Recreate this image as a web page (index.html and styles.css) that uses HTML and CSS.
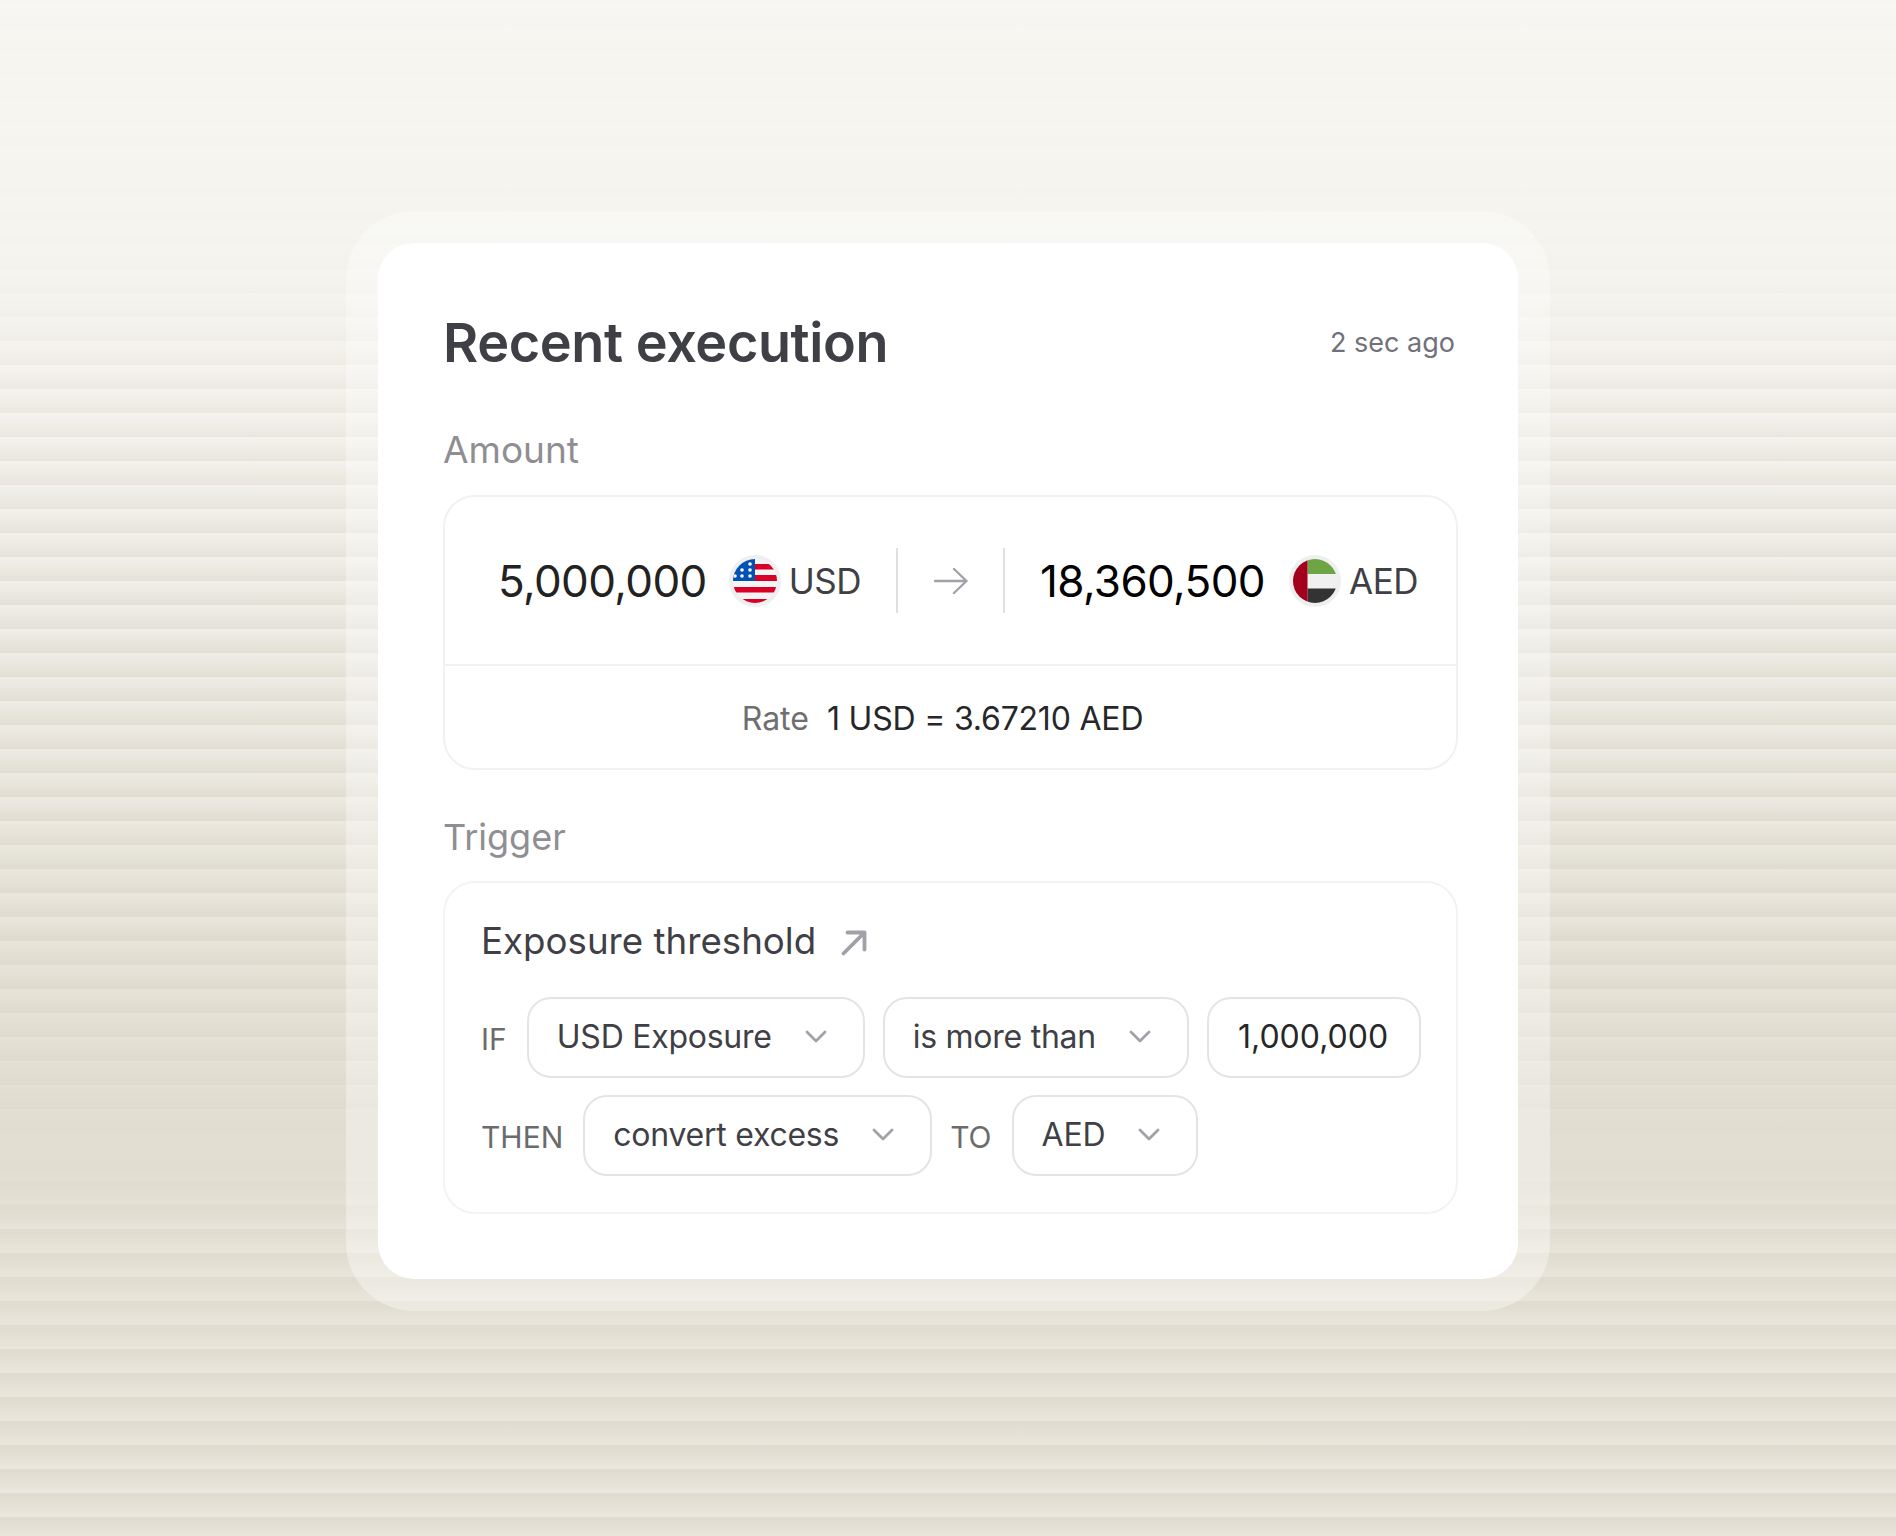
FILE: index.html

```html
<!DOCTYPE html>
<html lang="en">
<head>
  <meta charset="UTF-8" />
  <title>Recent execution</title>
  <meta name="viewport" content="width=device-width, initial-scale=1" />
  <link rel="stylesheet" href="styles.css">
</head>
<body>

  <div class="frame">
    <div class="card">

      <div class="card-head">
        <h1>Recent execution</h1>
        <span class="ago">2 sec ago</span>
      </div>

      <div class="section-label amount-label">Amount</div>
      <div class="amount-box">
        <div class="amount-row">
          <span class="num">5,000,000</span>
          <svg class="flag flag-usd" viewBox="0 0 52 52">
            <defs><clipPath id="clipUsd"><circle cx="26" cy="26" r="22" /></clipPath></defs>
            <circle cx="26" cy="26" r="26" fill="#efefef" />
            <g clip-path="url(#clipUsd)">
              <rect x="4" y="4" width="44" height="44" fill="#f4f4f4" />
              <rect x="26" y="9" width="22" height="5.5" fill="#d80027" />
              <rect x="26" y="20" width="22" height="6" fill="#d80027" />
              <rect x="4" y="32" width="44" height="5.5" fill="#d80027" />
              <rect x="4" y="44" width="44" height="5" fill="#d80027" />
              <rect x="4" y="4" width="22" height="22" fill="#0052b4" />
              <circle cx="21" cy="9" r="1.8" fill="#fff" />
              <circle cx="13" cy="15" r="1.8" fill="#fff" />
              <circle cx="21" cy="15" r="1.8" fill="#fff" />
              <circle cx="13" cy="21" r="1.8" fill="#fff" />
              <circle cx="21" cy="21" r="1.8" fill="#fff" />
              <circle cx="6" cy="21" r="1.8" fill="#fff" />
            </g>
          </svg>
          <span class="code code-usd">USD</span>
          <span class="vline vline-a"></span>
          <svg class="arrow-right" viewBox="0 0 34 28" fill="none" stroke="#a1a1aa" stroke-width="2.4" stroke-linecap="round" stroke-linejoin="round">
            <path d="M1 14H32.5M20 2L32.5 14L20 26" />
          </svg>
          <span class="vline vline-b"></span>
          <span class="num num-to">18,360,500</span>
          <svg class="flag flag-aed" viewBox="0 0 52 52">
            <defs><clipPath id="clipAed"><circle cx="26" cy="26" r="22" /></clipPath></defs>
            <circle cx="26" cy="26" r="26" fill="#efefef" />
            <g clip-path="url(#clipAed)">
              <rect x="4" y="4" width="44" height="44" fill="#f0f0f0" />
              <rect x="18.5" y="4" width="30" height="15" fill="#6da544" />
              <rect x="18.5" y="33.5" width="30" height="15" fill="#333" />
              <rect x="4" y="4" width="14.5" height="44" fill="#a2001d" />
            </g>
          </svg>
          <span class="code">AED</span>
        </div>
        <div class="rate-row">
          <span class="rate-label">Rate</span>
          <span class="rate-value">1 USD = 3.67210 AED</span>
        </div>
      </div>

      <div class="section-label trigger-label">Trigger</div>
      <div class="trigger-box">
        <div class="trigger-title">
          <span>Exposure threshold</span>
          <svg class="arrow-out" viewBox="0 0 26 26" fill="none" stroke="#a1a1aa" stroke-width="3.8" stroke-linecap="round" stroke-linejoin="round">
            <path d="M2.5 23.5L23.5 2.5M6.5 2.5H23.5V19.5" />
          </svg>
        </div>
        <div class="rule-row">
          <span class="word">IF</span>
          <div class="pill">
            <span>USD Exposure</span>
            <svg class="chev" viewBox="0 0 22 13" fill="none" stroke="#a1a1aa" stroke-width="2.8" stroke-linecap="round" stroke-linejoin="round"><path d="M2 2L11 11L20 2" /></svg>
          </div>
          <div class="pill">
            <span>is more than</span>
            <svg class="chev" viewBox="0 0 22 13" fill="none" stroke="#a1a1aa" stroke-width="2.8" stroke-linecap="round" stroke-linejoin="round"><path d="M2 2L11 11L20 2" /></svg>
          </div>
          <div class="pill pill-num">
            <span>1,000,000</span>
          </div>
        </div>
        <div class="rule-row">
          <span class="word">THEN</span>
          <div class="pill">
            <span>convert excess</span>
            <svg class="chev" viewBox="0 0 22 13" fill="none" stroke="#a1a1aa" stroke-width="2.8" stroke-linecap="round" stroke-linejoin="round"><path d="M2 2L11 11L20 2" /></svg>
          </div>
          <span class="word">TO</span>
          <div class="pill">
            <span>AED</span>
            <svg class="chev" viewBox="0 0 22 13" fill="none" stroke="#a1a1aa" stroke-width="2.8" stroke-linecap="round" stroke-linejoin="round"><path d="M2 2L11 11L20 2" /></svg>
          </div>
        </div>
      </div>

    </div>
  </div>

</body>
</html>
```

FILE: styles.css

```css
* {
  box-sizing: border-box;
}
body {
  margin: 0;
  height: 1536px;
  overflow: hidden;
  display: flex;
  justify-content: center;
  padding-top: 211px;
  font-family: Inter, "Noto Sans", sans-serif;
  color: #3f3f46;
  background: linear-gradient(to bottom,
    #f7f6f2 0, #f6f5f0 150px, #f5f4ef 210px, #f3f1eb 300px, #ede9e1 400px, #e4e1d7 600px, #e1ddd1 800px,
    #dfdbce 950px, #dfdbcf 1100px, #e4e1d6 1200px, #e8e5da 1240px, #ebe8df 1536px);
}
/* the blinds: top colour of every 24px slat fades into the bottom colour */
body::before {
  content: "";
  position: fixed;
  inset: 0;
  background: linear-gradient(to bottom,
    #f7f6f2 0, #f6f5f0 150px, #f5f4ef 210px, #f4f3ee 400px, #f0efe9 600px, #eceae2 800px,
    #e8e5da 950px, #e2dfd3 1100px, #dfdbce 1200px, #dedacd 1536px);
  -webkit-mask-image: linear-gradient(to bottom, #000, transparent);
  mask-image: linear-gradient(to bottom, #000, transparent);
  -webkit-mask-size: 100% 24px;
  mask-size: 100% 24px;
  -webkit-mask-position: 0 5px;
  mask-position: 0 5px;
}
.frame {
  position: relative;
  width: 1204px;
  height: 1100px;
  padding: 32px;
  border-radius: 68px;
  background: rgba(255, 255, 255, 0.35);
}
.card {
  height: 1036px;
  padding: 65px 60px 0 65px;
  border-radius: 36px;
  background: #fff;
}
.card-head {
  display: flex;
  justify-content: space-between;
  align-items: center;
  height: 68px;
  padding-right: 3px;
}
h1 {
  margin: 0;
  font-size: 54px;
  font-weight: 600;
  letter-spacing: -0.4px;
}
.ago {
  font-size: 27px;
  color: #71717a;
}
.section-label {
  font-size: 36px;
  line-height: 44px;
  color: #8e8e93;
}
.amount-label {
  font-size: 37px;
  margin-top: 52px;
  margin-bottom: 23px;
}
.trigger-label {
  margin-top: 45px;
  margin-bottom: 22px;
}
.amount-box {
  height: 275px;
  border: 2.5px solid #f1f1f1;
  border-radius: 32px;
}
.amount-row {
  display: flex;
  align-items: center;
  height: 169px;
  padding-left: 53px;
  border-bottom: 2.5px solid #f1f1f1;
}
.num {
  font-size: 44px;
  letter-spacing: -0.6px;
  color: #222;
}
.num-to {
  color: #000;
  margin-left: 35px;
}
.flag {
  width: 52px;
  height: 52px;
  margin-left: 22px;
  margin-right: 8px;
}
.flag-aed {
  margin-left: 24px;
}
.code {
  font-size: 35px;
  letter-spacing: -0.5px;
  color: #3f3f46;
}
.vline {
  width: 2px;
  height: 65px;
  background: #e0e0e0;
}
.vline-a {
  margin-left: 35px;
}
.arrow-right {
  width: 34px;
  height: 28px;
  margin: 0 35px 0 36px;
}
.rate-row {
  display: flex;
  justify-content: center;
  gap: 18px;
  padding-top: 33px;
  padding-right: 16px;
  font-size: 32px;
  line-height: 40px;
}
.rate-label {
  color: #6f6f6f;
}
.rate-value {
  letter-spacing: -0.2px;
  color: #27272a;
}
.trigger-box {
  height: 333px;
  padding: 35px 30px 0 36px;
  border: 2px solid #f3f3f3;
  border-radius: 32px;
}
.trigger-title {
  display: flex;
  align-items: center;
  gap: 25px;
  height: 44px;
  font-size: 36.7px;
  font-weight: 430;
  margin-bottom: 35px;
}
.arrow-out {
  width: 26px;
  height: 26px;
  margin-top: 6px;
}
.rule-row {
  display: flex;
  align-items: center;
  gap: 18px;
  margin-bottom: 17px;
}
.word {
  font-size: 30px;
  margin-right: 2px;
  color: #6b6b6b;
  padding-top: 2px;
}
.pill {
  display: flex;
  align-items: center;
  gap: 33px;
  height: 81px;
  padding: 0 36px 2px 28px;
  border: 2px solid #e4e4e7;
  border-radius: 24px;
  font-size: 32px;
  letter-spacing: -0.25px;
  white-space: nowrap;
  color: #3f3f46;
}
.pill-num {
  padding-left: 29px;
  padding-right: 31px;
  letter-spacing: 0;
  color: #27272a;
}
.chev {
  width: 22px;
  height: 13px;
}
```
